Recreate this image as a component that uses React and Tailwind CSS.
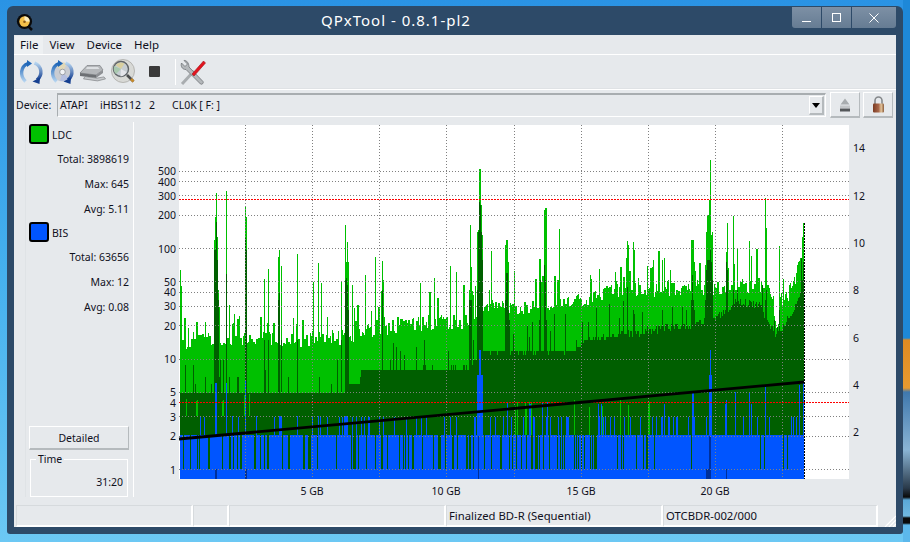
// QPxTool main window with the LDC/BIS quality scan
const FONT = "font-['Noto_Sans',sans-serif]"

function mulberry(seed) {
  let a = seed
  return () => {
    a = (a + 0x6d2b79f5) | 0
    let t = Math.imul(a ^ (a >>> 15), 1 | a)
    t = (t + Math.imul(t ^ (t >>> 7), 61 | t)) ^ t
    return ((t ^ (t >>> 14)) >>> 0) / 4294967296
  }
}

const yOf = (v) => 470 - 110.5 * Math.log10(v)
const quant = (y) => yOf(Math.max(1, Math.round(Math.pow(10, (470 - y) / 110.5))))

function lerp(points, x) {
  for (let i = 1; i < points.length; i++) {
    if (x <= points[i][0]) {
      const [x0, y0] = points[i - 1]
      const [x1, y1] = points[i]
      return y0 + ((y1 - y0) * (x - x0)) / (x1 - x0)
    }
  }
  return points[points.length - 1][1]
}

const LG_BASE = [[180, 342], [340, 338], [400, 326], [470, 320], [490, 308], [560, 305], [620, 290], [700, 287], [765, 285], [772, 305], [776, 332], [785, 300], [795, 278], [803, 255]]
const DG_BASE = [[180, 392], [344, 392], [346, 383], [359, 383], [361, 370], [470, 368], [482, 352], [575, 351], [585, 340], [650, 330], [700, 323], [725, 313], [735, 303], [760, 305], [766, 320], [775, 337], [785, 323], [795, 306], [803, 283]]

// [x, light green top, dark green top]
const PEAKS = [
  [180, 270, 0], [181, 286, 0], [214, 240, 250], [215, 217, 250], [216, 193, 222], [217, 237, 260], [218, 290, 300], [226, 191, 274], [245, 207, 238], [246, 217, 250],
  [264, 279, 340], [268, 269, 340], [278, 257, 300], [279, 250, 293], [281, 266, 340], [297, 254, 340], [313, 282, 0], [318, 263, 0], [321, 283, 0],
  [341, 281, 340], [345, 225, 280], [346, 262, 278], [347, 242, 285], [348, 262, 310], [352, 285, 0], [365, 275, 0], [375, 257, 0], [382, 261, 290], [383, 280, 0],
  [420, 283, 0], [434, 278, 0], [450, 266, 0], [456, 272, 0], [469, 290, 300], [470, 225, 300], [471, 267, 300], [477, 232, 290], [478, 230, 232], [479, 169, 202], [480, 169, 205], [481, 205, 232], [482, 235, 260],
  [491, 251, 0], [505, 245, 300], [506, 240, 273], [507, 240, 273], [508, 262, 310], [514, 271, 0], [539, 259, 320], [540, 259, 280], [544, 210, 265], [545, 208, 280], [546, 208, 320], [559, 229, 0],
  [590, 275, 0], [599, 269, 0], [615, 272, 0], [627, 241, 287], [628, 245, 330], [633, 242, 310], [634, 250, 0], [653, 260, 0], [662, 260, 310],
  [691, 240, 300], [692, 240, 275], [693, 240, 300], [694, 262, 310], [705, 265, 300], [706, 232, 270], [707, 215, 260], [708, 215, 260], [709, 200, 260], [710, 160, 250], [711, 235, 262], [712, 232, 280],
  [726, 252, 262], [727, 223, 270], [733, 216, 290], [737, 248, 290], [749, 241, 300], [765, 198, 300], [766, 228, 290], [779, 246, 310], [802, 237, 280], [803, 223, 262],
]

const BLUE_PEAKS = [
  [200, 416], [215, 383], [216, 383], [226, 383], [232, 416], [245, 380], [256, 416], [279, 416], [280, 416], [281, 416], [297, 416], [318, 416], [320, 416], [344, 416], [345, 416], [346, 416], [347, 416],
  [477, 375], [478, 375], [479, 350], [480, 350], [481, 375], [482, 375], [507, 402], [542, 402], [547, 402], [692, 392], [693, 392], [709, 375], [710, 350], [711, 375], [726, 400], [735, 392], [749, 392], [765, 385], [799, 385], [803, 382],
]

function buildChart() {
  const rand = mulberry(20240)
  const lg = []
  const dg = []
  const lightSlit = []
  const blue = []
  const darkBlue = []
  const lgPeaks = new Map(PEAKS.map((p) => [p[0], p[1]]))
  const dgPeaks = new Map(PEAKS.filter((p) => p[2]).map((p) => [p[0], p[2]]))
  const bluePeaks = new Map(BLUE_PEAKS)
  let hold = 0
  let prevNoise = 0
  for (let x = 180; x <= 803; x++) {
    if (hold > 0) hold--
    else {
      prevNoise = (rand() - 0.5) * 16
      const r = rand()
      if (r < 0.24) prevNoise -= rand() * 34
      hold = rand() < 0.5 ? 1 : 0
    }
    const lgTop = lgPeaks.get(x) ?? lerp(LG_BASE, x) + prevNoise
    lg.push(`M${x}.5 ${lgTop.toFixed(1)}V479`)

    let dgTop = lerp(DG_BASE, x) + (rand() - 0.5) * (x > 620 ? 8 : 4)
    const r2 = rand()
    if (x < 480 && r2 < 0.14) dgTop -= 12 + rand() * 20
    else if (x >= 480 && r2 < 0.08) dgTop -= 10 + rand() * 28
    dgTop = dgPeaks.get(x) ?? Math.max(quant(dgTop), lgTop)
    dg.push(`M${x}.5 ${dgTop.toFixed(1)}V479`)

    if (x > 480 && x < 660 && rand() < 0.06) lightSlit.push(`M${x}.5 ${400 + rand() * 10}V435`)
    else if (x < 260 && rand() < 0.05) lightSlit.push(`M${x}.5 ${392 + rand() * 10}V416`)

    let top = 435
    const slitChance = x < 340 ? 0.3 : x < 640 ? 0.22 : 0.05
    const r3 = rand()
    if (r3 < slitChance) top = 469
    else if (rand() < (x > 340 && x < 720 ? 0.16 : 0.07)) top = yOf(3)
    if (x > 500 && x < 800 && rand() < 0.04) top = yOf(4)
    top = bluePeaks.get(x) ?? top
    blue.push(`M${x}.5 ${top.toFixed(1)}V479`)

    if ([215, 216, 245, 246, 706, 707, 708, 726].includes(x)) darkBlue.push(`M${x}.5 469V479`)
    if ([478, 709, 710].includes(x)) darkBlue.push(`M${x}.5 436V479`)
  }
  return {
    lg: lg.join(''),
    dg: dg.join(''),
    lightSlit: lightSlit.join(''),
    blue: blue.join(''),
    darkBlue: darkBlue.join(''),
  }
}

const CHART = buildChart()
const H_GRID = [1, 2, 3, 4, 5, 10, 20, 30, 40, 50, 100, 200, 300, 400, 500]
const H_GRID_Y = [1, 2, 3, 5, 10, 20, 30, 40, 50, 100, 200, 300, 400, 500]
const V_GRID = [245, 312, 379, 446, 514, 581, 648, 715, 782]
const X_LABELS = [[312, '5 GB'], [446, '10 GB'], [581, '15 GB'], [715, '20 GB']]
const RIGHT_LABELS = [[148, '14'], [196, '12'], [243, '10'], [290, '8'], [338, '6'], [385, '4'], [432, '2']]

function Chart() {
  return (
    <svg viewBox="134 122 762 383" width="762" height="383" className="block shrink-0">
      <rect x="179" y="125" width="670" height="354" fill="#ffffff" />
      <path d={CHART.lg} stroke="#00c000" strokeWidth="1" shapeRendering="crispEdges" />
      <path d={CHART.dg} stroke="#005f00" strokeWidth="1" shapeRendering="crispEdges" />
      <path d={CHART.lightSlit} stroke="#00c000" strokeWidth="1" shapeRendering="crispEdges" />
      <path d={CHART.blue} stroke="#0055ff" strokeWidth="1" shapeRendering="crispEdges" />
      <path d={CHART.darkBlue} stroke="#00309a" strokeWidth="1" shapeRendering="crispEdges" />
      {H_GRID_Y.map((v) => (
        <line key={v} x1="179" x2="849" y1={Math.round(yOf(v)) - 0.5} y2={Math.round(yOf(v)) - 0.5} stroke="#808080" strokeDasharray="1 2" shapeRendering="crispEdges" />
      ))}
      {V_GRID.map((x) => (
        <line key={x} x1={x + 0.5} x2={x + 0.5} y1="125" y2="479" stroke="#808080" strokeDasharray="1 2" shapeRendering="crispEdges" />
      ))}
      <line x1="179" x2="849" y1="199.5" y2="199.5" stroke="#ff0000" strokeDasharray="2 1" />
      <line x1="179" x2="849" y1="402.5" y2="402.5" stroke="#ff0000" strokeDasharray="2 1" />
      <line x1="179" y1="439" x2="804" y2="382" stroke="#000000" strokeWidth="2.8" />
      <line x1="804.5" x2="804.5" y1="223" y2="479" stroke="#000000" strokeDasharray="2 1" shapeRendering="crispEdges" />
      <g fill="#10101c" fontSize="10.5" fontFamily="'Noto Sans', sans-serif">
        {H_GRID.map((v) => (
          <text key={v} x="176" y={yOf(v) + 3.5} textAnchor="end">{v}</text>
        ))}
        {RIGHT_LABELS.map(([y, t]) => (
          <text key={t} x="853" y={y + 4}>{t}</text>
        ))}
        {X_LABELS.map(([x, t]) => (
          <text key={t} x={x} y="495" textAnchor="middle">{t}</text>
        ))}
      </g>
    </svg>
  )
}

function AppIcon() {
  return (
    <svg width="18" height="18" viewBox="0 0 18 18" className="shrink-0">
      <circle cx="8.5" cy="8.5" r="7.6" fill="#0a0a0a" />
      <path d="M12 13l4 4" stroke="#0a0a0a" strokeWidth="2.5" />
      <circle cx="8.5" cy="8.5" r="5.2" fill="#f3c04a" />
      <path d="M8.5 3.3a5.2 5.2 0 0 1 5.2 5.2H8.5z" fill="#fbeec0" />
      <circle cx="8.5" cy="8.8" r="1.3" fill="#8a5a18" />
    </svg>
  )
}

function Arcs({ id }) {
  return (
    <>
      <defs>
        <linearGradient id={`${id}a`} x1="0" y1="0" x2="0" y2="1">
          <stop offset="0" stopColor="#1f66b8" />
          <stop offset="1" stopColor="#b5d4f0" />
        </linearGradient>
        <linearGradient id={`${id}b`} x1="0" y1="0" x2="0" y2="1">
          <stop offset="0" stopColor="#b5d4f0" />
          <stop offset="1" stopColor="#153f90" />
        </linearGradient>
      </defs>
      <path d="M9 3.500C1.500 6.500 0.500 16 6.500 21.500" fill="none" stroke={`url(#${id}a)`} strokeWidth="3.4" />
      <path d="M15.500 3C23 6 24 15 18 20" fill="none" stroke={`url(#${id}b)`} strokeWidth="3.4" />
      <path d="M8 0l5 3.500-5 3.500z" fill="#1f66b8" />
      <path d="M21 17.500l-.5 6.500-7-2.500z" fill="#153f90" />
    </>
  )
}

function ReloadIcon() {
  return (
    <svg width="25" height="24" viewBox="0 0 25 24">
      <Arcs id="rl" />
    </svg>
  )
}

function DiscReloadIcon() {
  return (
    <svg width="25" height="24" viewBox="0 0 25 24">
      <circle cx="12.5" cy="12" r="9.5" fill="#c9ccd2" />
      <path d="M12.5 12L6 5.500A9.500 9.500 0 0 1 17 3.800z" fill="#e0d8b8" />
      <path d="M12.5 12l6.500 6.500a9.500 9.500 0 0 1-9 2.200z" fill="#b5bfe0" />
      <circle cx="12.5" cy="12" r="2.8" fill="#f2f3f5" stroke="#8d9096" strokeWidth="0.8" />
      <Arcs id="dr" />
    </svg>
  )
}

function DriveIcon() {
  return (
    <svg width="27" height="18" viewBox="0 0 27 18">
      <path d="M1 9L8 1.500h13L24 6 17 11z" fill="#b4b7ba" stroke="#7b7e82" strokeWidth="0.7" />
      <path d="M1 9l16 2v3L1 12z" fill="#6d7074" />
      <path d="M17 11l7-5v3l-7 5z" fill="#8d9094" />
      <path d="M6 12.500l12 1.600 7-1.200 1.500 2-8 2-14-2z" fill="#c5c8cb" stroke="#74777b" strokeWidth="0.6" />
      <path d="M8 3h11l1.500 2H7z" fill="#dcdfe2" />
    </svg>
  )
}

function SearchDiscIcon() {
  return (
    <svg width="27" height="26" viewBox="0 0 27 26">
      <circle cx="13" cy="12" r="11.500" fill="#d8d9d6" stroke="#a9aaa6" strokeWidth="0.8" />
      <circle cx="11" cy="10" r="7.500" fill="#c6cdd2" stroke="#5f6468" strokeWidth="1.400" />
      <path d="M11 10L5.500 6a7.500 7.500 0 0 1 9-1.500z" fill="#d8cf9f" />
      <path d="M11 10l-5 5a7.500 7.500 0 0 1-1.800-8z" fill="#a8c8ae" />
      <path d="M11 10l5.500 3a7.500 7.500 0 0 1-6 4.500z" fill="#e4e5ea" />
      <path d="M17 16l6.500 6.500" stroke="#4a4c4e" strokeWidth="2.600" />
      <path d="M21 20l2.500 2.500" stroke="#c78a2a" strokeWidth="2.600" />
    </svg>
  )
}

function ToolsIcon() {
  return (
    <svg width="27" height="26" viewBox="0 0 27 26">
      <path d="M3 25L15 12" stroke="#a9adb0" strokeWidth="3" />
      <path d="M5 1.500l3.500 3.500-2.500 2.500-3.500-3.500C1.500 7 3 10.500 7 10.500L21.500 25c1.500 1 3.500-1 2.500-2.500L10 8C10 4 7.500 1 5 1.500z" fill="#b4b8bb" stroke="#6f7276" strokeWidth="0.8" />
      <path d="M13 15L24.500 2l2 2L15 17z" fill="#e3141e" stroke="#a01018" strokeWidth="0.6" />
    </svg>
  )
}

function EjectIcon() {
  return (
    <svg width="12" height="14" viewBox="0 0 12 14">
      <path d="M6 0.500L10.500 6.500h-9z" fill="#a8acaf" />
      <rect x="1" y="7.500" width="10" height="2.500" fill="#c2c5c8" />
      <rect x="1" y="10.500" width="10" height="3" fill="#54575a" />
    </svg>
  )
}

function LockIcon() {
  return (
    <svg width="13" height="17" viewBox="0 0 13 17">
      <defs>
        <linearGradient id="lockbody" x1="0" y1="0" x2="1" y2="0">
          <stop offset="0" stopColor="#7a3a22" />
          <stop offset="0.5" stopColor="#a8674a" />
          <stop offset="0.75" stopColor="#e2c49a" />
          <stop offset="1" stopColor="#8a5a3a" />
        </linearGradient>
      </defs>
      <path d="M3 8V4.500a3.500 3.500 0 0 1 7 0V8" fill="none" stroke="#85888b" strokeWidth="1.600" />
      <rect x="1" y="7.500" width="11" height="9" rx="1" fill="url(#lockbody)" />
    </svg>
  )
}

function StatRow({ children }) {
  return <div className="h-[25px] flex items-center justify-end pr-[4px]">{children}</div>
}

function Legend({ swatch, label }) {
  return (
    <div className="h-[20px] flex items-center gap-[3px] ml-[3px]">
      <span className={`w-[20px] h-[20px] rounded-[3px] border-2 border-black ${swatch}`} />
      <span className="pt-[2px]">{label}</span>
    </div>
  )
}

function StatusCell({ className, children }) {
  return (
    <div className={`h-[22px] border-t border-l border-[#d6dadd] border-b-2 border-r-2 border-b-white border-r-white flex items-center pl-[2px] text-[11.3px] ${className}`}>
      {children}
    </div>
  )
}

export default function App() {
  return (
    <div className={`w-[910px] h-[542px] flex overflow-hidden bg-[linear-gradient(180deg,#2a93e4,#45b0ee_50%,#6cc8f4)] text-[10.5px] leading-none text-[#10101c] ${FONT}`}>
      <div className="w-[7px] shrink-0" />
      <div className="w-[896px] shrink-0 mt-[6px] h-[528px] rounded-t-[6px] rounded-b-[3px] bg-[#2d4a68] flex flex-col pl-[7px] pr-[7px] pb-[7px]">
        {/* title bar */}
        <div className="h-[29px] shrink-0 flex items-start -mr-[7px]">
          <div className="mt-[7px] ml-[2px]">
            <AppIcon />
          </div>
          <div className="ml-[287px] mt-[6px] text-[15px] leading-[17px] tracking-[1px] text-white">QPxTool - 0.8.1-pl2</div>
          <div className="ml-auto mr-[7px] mt-[1px] h-[21px] flex gap-[1px] text-white">
            <div className="w-[29px] rounded-bl-[3px] bg-[linear-gradient(180deg,#7d90a5,#667c93)] flex justify-center">
              <span className="mt-[14px] w-[9px] h-[1px] bg-white" />
            </div>
            <div className="w-[29px] bg-[linear-gradient(180deg,#7d90a5,#667c93)] flex justify-center items-center">
              <span className="w-[9px] h-[9px] border border-white" />
            </div>
            <div className="w-[44px] rounded-br-[3px] bg-[linear-gradient(180deg,#7d90a5,#667c93)] flex justify-center items-center">
              <svg width="10" height="10" viewBox="0 0 10 10">
                <path d="M0.500 0.500l9 9M9.500 0.500l-9 9" stroke="#ffffff" strokeWidth="1" fill="none" />
              </svg>
            </div>
          </div>
        </div>

        {/* client area */}
        <div className="flex-1 bg-[#e6e9ec] flex flex-col min-h-0">
          {/* menu */}
          <div className="h-[20px] shrink-0 flex items-stretch pl-[1px] pt-[1px] border-b border-white text-[11.5px]">
            <span className="px-[5px] flex items-center bg-[#edf0f2]">File</span>
            <span className="pl-[6px] pr-[6px] flex items-center">View</span>
            <span className="px-[6px] flex items-center">Device</span>
            <span className="px-[6px] flex items-center">Help</span>
          </div>

          {/* toolbar */}
          <div className="h-[34px] shrink-0 flex items-center border-b border-[#dfe2e5] pl-[2px]">
            <div className="w-[31px] flex justify-center"><ReloadIcon /></div>
            <div className="w-[30px] flex justify-center"><DiscReloadIcon /></div>
            <div className="w-[31px] flex justify-center pt-[3px]"><DriveIcon /></div>
            <div className="w-[31px] flex justify-center"><SearchDiscIcon /></div>
            <div className="w-[31px] flex justify-center">
              <span className="w-[11px] h-[11px] bg-[#3a3a3a] rounded-[1px]" />
            </div>
            <div className="ml-[5px] w-[1px] h-[26px] bg-white" />
            <div className="ml-[2px] w-[28px] flex justify-center"><ToolsIcon /></div>
          </div>

          {/* device row */}
          <div className="h-[33px] shrink-0 flex items-center pl-[2px] pr-[3px] pb-[2px] border-t border-white">
            <span className="w-[41px]">Device:</span>
            <div className="w-[769px] h-[24px] border-t-2 border-l border-[#a8adb0] border-r border-b border-r-white border-b-white flex items-center pl-[2px] pr-[1px]">
              <span className="w-[40px]">ATAPI</span>
              <span className="w-[49px]">iHBS112</span>
              <span className="w-[23px]">2</span>
              <span>CL0K [ F: ]</span>
              <div className="ml-auto w-[15px] h-[19px] border-t border-l border-white border-r-2 border-b-2 border-r-[#b5babd] border-b-[#b5babd] flex items-center justify-center">
                <svg width="8" height="5" viewBox="0 0 8 5"><path d="M0 0h8L4 5z" fill="#000000" /></svg>
              </div>
            </div>
            <div className="ml-[4px] w-[30px] h-[26px] border-t border-l border-white border-r border-b-2 border-r-[#b5babd] border-b-[#b5babd] flex items-center justify-center">
              <EjectIcon />
            </div>
            <div className="ml-[3px] w-[30px] h-[26px] border-t border-l border-white border-r border-b-2 border-r-[#b5babd] border-b-[#b5babd] flex items-center justify-center">
              <LockIcon />
            </div>
          </div>

          {/* main */}
          <div className="flex-1 flex min-h-0">
            <div className="ml-[11px] w-[109px] shrink-0 mb-[8px] pt-[2px] border-l border-[#dfe3e6] border-r border-r-white flex flex-col">
              <Legend swatch="bg-[#00c000]" label="LDC" />
              <div className="h-[3px]" />
              <StatRow>Total: 3898619</StatRow>
              <StatRow>Max: 645</StatRow>
              <StatRow>Avg: 5.11</StatRow>
              <Legend swatch="bg-[#0055ff]" label="BIS" />
              <div className="h-[3px]" />
              <StatRow>Total: 63656</StatRow>
              <StatRow>Max: 12</StatRow>
              <StatRow>Avg: 0.08</StatRow>
              <div className="mt-auto ml-[3px] w-[100px] h-[24px] pt-[1px] border-t border-l border-white border-r border-b-2 border-r-[#b5babd] border-b-[#b5babd] flex items-center justify-center">
                Detailed
              </div>
              <div className="relative mt-[9px] ml-[4px] w-[98px] h-[38px] border border-white flex items-end justify-end pr-[4px] pb-[9px]">
                <span className="absolute -top-[6px] left-[5px] px-[2px] bg-[#e6e9ec]">Time</span>
                31:20
              </div>
            </div>
            <Chart />
          </div>

          {/* status bar */}
          <div className="h-[22px] shrink-0 flex pl-[2px]">
            <StatusCell className="w-[177px]" />
            <StatusCell className="w-[36px]" />
            <StatusCell className="w-[217px]" />
            <StatusCell className="w-[217px]">Finalized BD-R (Sequential)</StatusCell>
            <StatusCell className="w-[215px]">OTCBDR-002/000</StatusCell>
            <div className="flex-1 flex items-end justify-end">
              <svg width="12" height="12" viewBox="0 0 12 12">
                <path d="M12 1L1 12M12 5L5 12M12 9L9 12" stroke="#ffffff" strokeWidth="1.200" />
              </svg>
            </div>
          </div>
        </div>
      </div>
      <div className="flex-1 bg-[linear-gradient(180deg,#1e88d8_0,#1e88d8_338px,#e08a22_340px,#e89a30_388px,#3f78ad_392px,#8ab4d4_450px,#2a3a4a_488px,#0a0a0a_497px,#5aa8d8_500px,#70b8e0_516px,#0a0a0a_518px,#0a0a0a_523px,#5cb8ec_525px)]" />
    </div>
  )
}
